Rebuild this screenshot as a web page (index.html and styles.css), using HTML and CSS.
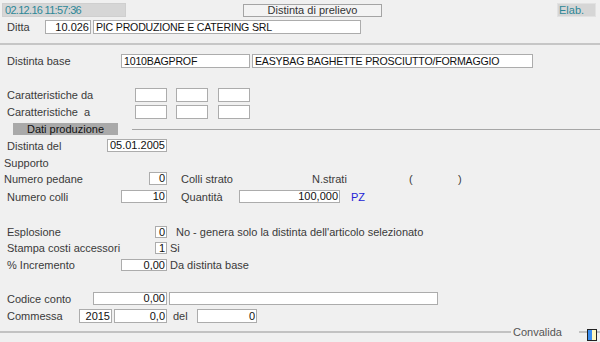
FILE: index.html
```html
<!DOCTYPE html>
<html lang="it">
<head>
    <meta charset="UTF-8">
    <title>Distinta di prelievo</title>
    <link rel="stylesheet" href="styles.css">
</head>
<body>
    <div class="screen">
        <div class="row top-bar">
            <div class="clock">02.12.16 11:57:36</div>
            <div class="title">Distinta di prelievo</div>
            <div class="elab">Elab.</div>
        </div>

        <div class="row r-ditta">
            <span class="lbl w-ditta">Ditta</span>
            <span class="fld num w46">10.026</span>
            <span class="fld up w268 ml2">PIC PRODUZIONE E CATERING SRL</span>
        </div>

        <div class="divider"></div>

        <div class="row r-base">
            <span class="lbl w114">Distinta base</span>
            <span class="fld up w129">1010BAGPROF</span>
            <span class="fld up w281 ml2">EASYBAG BAGHETTE PROSCIUTTO/FORMAGGIO</span>
        </div>

        <div class="row r-car-da">
            <span class="lbl w128">Caratteristiche da</span>
            <span class="fld w32"></span>
            <span class="fld w32 ml9"></span>
            <span class="fld w32 ml10"></span>
        </div>
        <div class="row r-car-a">
            <span class="lbl w128">Caratteristiche &nbsp;a</span>
            <span class="fld w32"></span>
            <span class="fld w32 ml9"></span>
            <span class="fld w32 ml10"></span>
        </div>

        <div class="row r-dati">
            <span class="tab">Dati produzione</span>
            <span class="tab-line"></span>
        </div>

        <div class="row r-del">
            <span class="lbl w100">Distinta del</span>
            <span class="fld num w60">05.01.2005</span>
        </div>

        <div class="row r-supp">
            <span class="lbl">Supporto</span>
        </div>

        <div class="row r-pedane">
            <span class="lbl w145">Numero pedane</span>
            <span class="fld num w18">0</span>
            <span class="lbl ml14 w131">Colli strato</span>
            <span class="lbl w97">N.strati</span>
            <span class="lbl w49">(</span>
            <span class="lbl">)</span>
        </div>

        <div class="row r-colli">
            <span class="lbl w114">Numero colli</span>
            <span class="fld num w46">10</span>
            <span class="lbl ml14 w58">Quantità</span>
            <span class="fld num w101">100,000</span>
            <span class="unit">PZ</span>
        </div>

        <div class="row r-espl">
            <span class="lbl w148">Esplosione</span>
            <span class="fld num w12">0</span>
            <span class="lbl ml9">No - genera solo la distinta dell'articolo selezionato</span>
        </div>
        <div class="row r-stampa">
            <span class="lbl w148">Stampa costi accessori</span>
            <span class="fld num w12">1</span>
            <span class="lbl ml3">Si</span>
        </div>
        <div class="row r-incr">
            <span class="lbl w114">% Incremento</span>
            <span class="fld num w46">0,00</span>
            <span class="lbl ml3">Da distinta base</span>
        </div>

        <div class="row r-conto">
            <span class="lbl w86">Codice conto</span>
            <span class="fld num w74">0,00</span>
            <span class="fld w269 ml2"></span>
        </div>
        <div class="row r-commessa">
            <span class="lbl w72">Commessa</span>
            <span class="fld num w33">2015</span>
            <span class="fld num w53 ml2">0,0</span>
            <span class="lbl ml6 w24">del</span>
            <span class="fld num w60">0</span>
        </div>

        <div class="row r-bottom">
            <span class="rule"></span>
            <span class="confirm">Convalida</span>
            <span class="rule short"></span>
            <span class="save-icon"></span>
            <span class="rule tail"></span>
        </div>
    </div>
</body>
</html>
```

FILE: styles.css
```css
body {
    margin: 0;
    background: #f0f0f0;
    font-family: "Liberation Sans", Arial, sans-serif;
    font-size: 11px;
    color: #3a3a3a;
}
.screen {
    width: 600px;
    height: 342px;
    overflow: hidden;
}
.row {
    display: flex;
    align-items: center;
    padding-left: 7px;
    white-space: nowrap;
}

/* top bar */
.top-bar { margin-top: 3px; height: 14px; padding-left: 2px; }
.clock {
    width: 124px;
    height: 14px;
    box-sizing: border-box;
    background: #d6d6d6;
    border: 1px solid #cfcfcf;
    color: #2d8796;
    font-size: 11px;
    letter-spacing: -0.7px;
    line-height: 12px;
    padding-left: 2px;
}
.title {
    margin-left: 117px;
    width: 139px;
    height: 13px;
    box-sizing: border-box;
    border: 1px solid #a4a4a4;
    background: #f3f3f3;
    text-align: center;
    line-height: 11px;
    color: #333;
}
.elab {
    margin-left: 175px;
    width: 39px;
    height: 14px;
    box-sizing: border-box;
    background: #d6d6d6;
    border: 1px solid #e2e2e2;
    color: #2d8796;
    line-height: 12px;
    padding-left: 1px;
}

.divider {
    margin-top: 9px;
    height: 2px;
    background: #c6c6c6;
}

/* fields */
.lbl { display: inline-block; }
.fld {
    display: inline-block;
    height: 100%;
    box-sizing: border-box;
    background: #fff;
    border: 1px solid #acacac;
    color: #111;
    padding: 0 2px;
    overflow: hidden;
}
.fld.up { font-size: 10.6px; letter-spacing: -0.2px; }
.fld.num { text-align: right; padding: 0 1px 0 0; }
.unit { margin-left: 11px; color: #2323d6; }

.r-ditta { margin-top: 3px; height: 14px; }
.r-ditta .fld, .r-base .fld { line-height: 12px; }
.r-base { margin-top: 9px; height: 14px; }
.r-car-da { margin-top: 20px; height: 14px; }
.r-car-a { margin-top: 3px; height: 14px; }
.r-dati { margin-top: 4px; height: 12px; padding-left: 13px; }
.r-del { margin-top: 4px; height: 13px; }
.r-supp { margin-top: 4px; height: 13px; padding-left: 4px; }
.r-pedane { margin-top: 3px; height: 13px; padding-left: 4px; }
.r-colli { margin-top: 5px; height: 13px; }
.r-espl { margin-top: 23px; height: 12px; }
.r-stampa { margin-top: 4px; height: 12px; }
.r-incr { margin-top: 5px; height: 12px; }
.r-conto { margin-top: 21px; height: 13px; }
.r-commessa { margin-top: 4px; height: 14px; }
.r-del .fld, .r-pedane .fld, .r-colli .fld, .r-conto .fld { line-height: 11px; }
.r-espl .fld, .r-stampa .fld, .r-incr .fld { line-height: 10px; }
.r-commessa .fld { line-height: 12px; }

.tab {
    width: 105px;
    height: 12px;
    background: #a9a9a9;
    color: #111;
    text-align: center;
    line-height: 12px;
}
.tab-line {
    flex: 1;
    height: 1px;
    margin-left: 14px;
    background: #a6a6a6;
}

/* bottom bar */
.r-bottom {
    margin-top: 3px;
    height: 12px;
    padding-left: 0;
}
.rule {
    width: 511px;
    height: 2px;
    background: #c2c2c2;
}
.rule.short { width: 8px; margin-left: 17px; }
.rule.tail { flex: 1; }
.confirm { margin-left: 2px; color: #555; }
.save-icon {
    align-self: flex-start;
    margin-top: 3px;
    width: 10px;
    height: 12px;
    box-sizing: border-box;
    border: 1px solid #222;
    background: linear-gradient(to right, #3a8ef0 50%, #fff8c0 50%);
}

/* widths and spacing */
.w-ditta { width: 38px; }
.w12 { width: 12px; }
.w18 { width: 18px; }
.w24 { width: 24px; }
.w32 { width: 32px; }
.w33 { width: 33px; }
.w46 { width: 46px; }
.w49 { width: 49px; }
.w53 { width: 53px; }
.w58 { width: 58px; }
.w60 { width: 60px; }
.w72 { width: 72px; }
.w74 { width: 74px; }
.w86 { width: 86px; }
.w97 { width: 97px; }
.w100 { width: 100px; }
.w101 { width: 101px; }
.w114 { width: 114px; }
.w128 { width: 128px; }
.w129 { width: 129px; }
.w131 { width: 131px; }
.w145 { width: 145px; }
.w148 { width: 148px; }
.w268 { width: 268px; }
.w269 { width: 269px; }
.w281 { width: 281px; }
.ml2 { margin-left: 2px; }
.ml3 { margin-left: 3px; }
.ml6 { margin-left: 6px; }
.ml9 { margin-left: 9px; }
.ml10 { margin-left: 10px; }
.ml14 { margin-left: 14px; }
```
